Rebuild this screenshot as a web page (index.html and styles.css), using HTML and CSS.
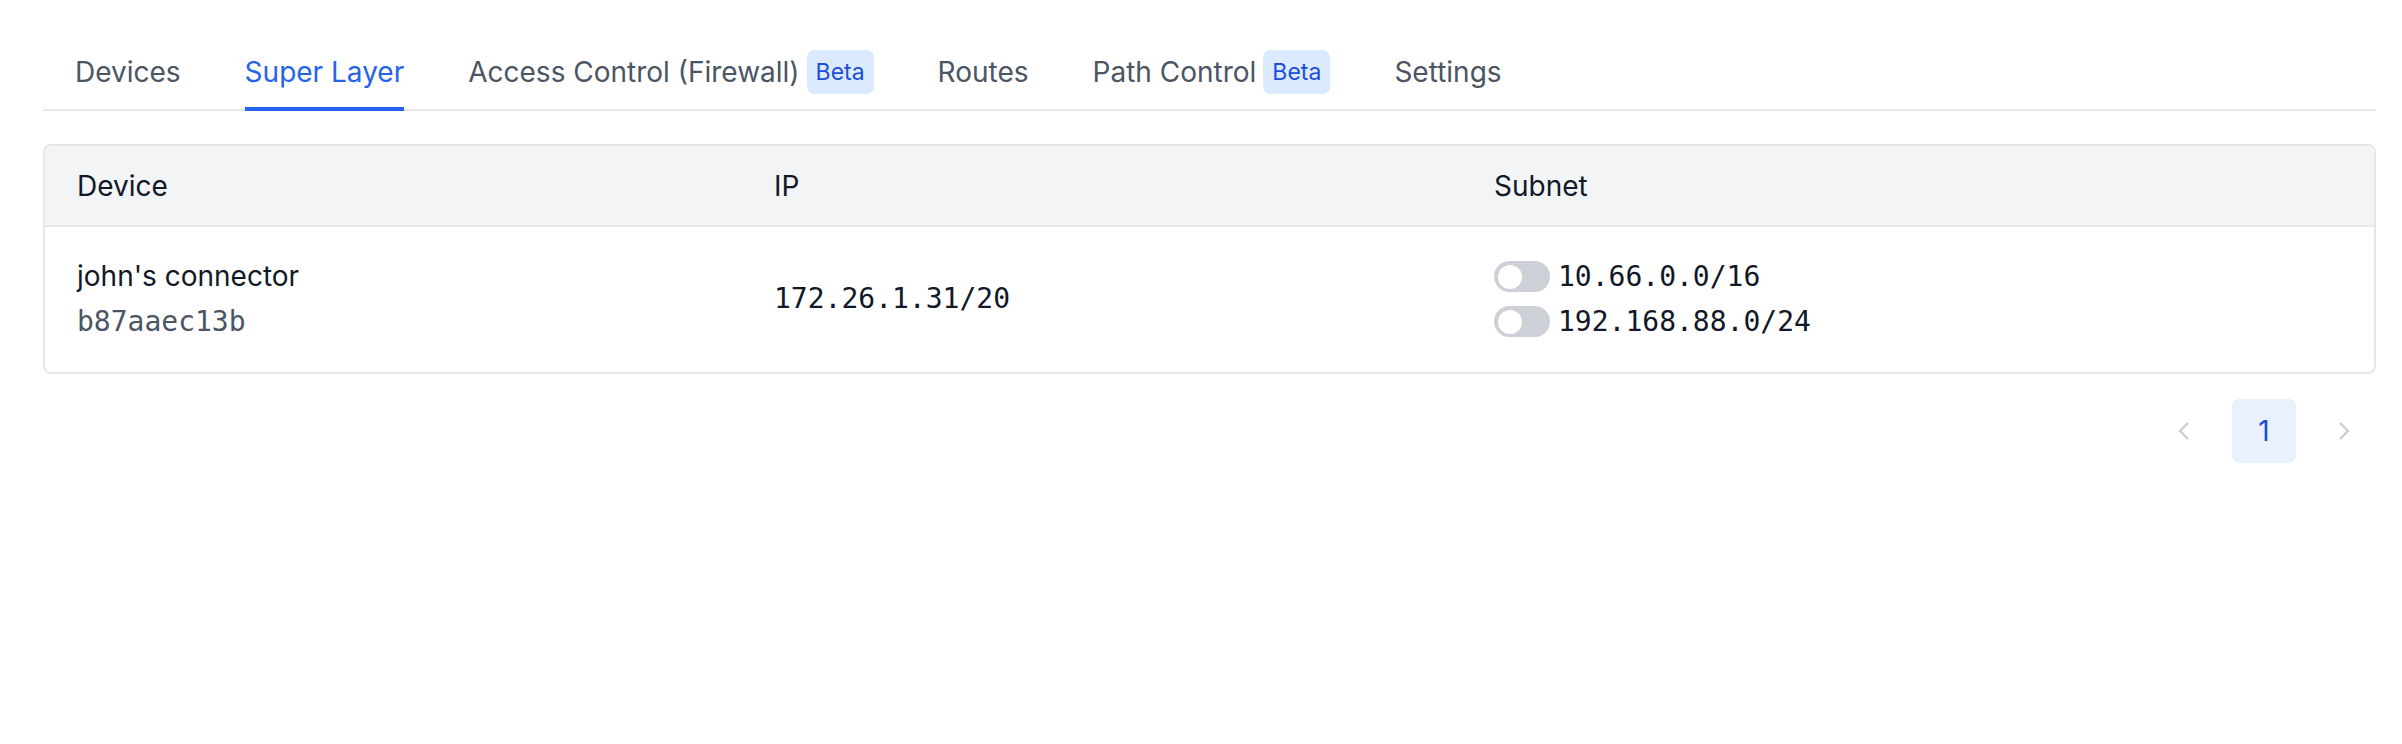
FILE: index.html
```html
<!DOCTYPE html>
<html lang="en">
<head>
    <meta charset="UTF-8">
    <title>Super Layer</title>
    <link rel="stylesheet" href="styles.css">
</head>
<body>
    <div class="page">
        <nav class="tabs">
            <a class="tab">Devices</a>
            <a class="tab active">Super Layer</a>
            <a class="tab">Access Control (Firewall) <span class="badge">Beta</span></a>
            <a class="tab">Routes</a>
            <a class="tab">Path Control <span class="badge">Beta</span></a>
            <a class="tab">Settings</a>
        </nav>

        <div class="table-wrap">
            <table class="devices">
                <colgroup>
                    <col class="col-device">
                    <col class="col-ip">
                    <col>
                </colgroup>
                <thead>
                    <tr>
                        <th>Device</th>
                        <th>IP</th>
                        <th>Subnet</th>
                    </tr>
                </thead>
                <tbody>
                    <tr>
                        <td>
                            <div class="device-name">john's connector</div>
                            <div class="device-id">b87aaec13b</div>
                        </td>
                        <td class="mono">172.26.1.31/20</td>
                        <td>
                            <div class="subnets">
                                <label class="subnet"><span class="toggle"></span><span class="mono">10.66.0.0/16</span></label>
                                <label class="subnet"><span class="toggle"></span><span class="mono">192.168.88.0/24</span></label>
                            </div>
                        </td>
                    </tr>
                </tbody>
            </table>
        </div>

        <div class="pager">
            <button class="page-btn arrow" disabled>
                <svg width="12" height="18" viewBox="0 0 12 18"><polyline points="10,1 2,9 10,17" fill="none" stroke="#c6cad0" stroke-width="2"/></svg>
            </button>
            <button class="page-btn current">1</button>
            <button class="page-btn arrow" disabled>
                <svg width="12" height="18" viewBox="0 0 12 18"><polyline points="2,1 10,9 2,17" fill="none" stroke="#c6cad0" stroke-width="2"/></svg>
            </button>
        </div>
    </div>
</body>
</html>
```

FILE: styles.css
```css
body {
    margin: 0;
    font-family: Inter, "Noto Sans", sans-serif;
    background: white;
    color: #111827;
}

.page {
    padding: 50px 26px 0 43px;
}

.tabs {
    display: flex;
    gap: 64px;
    padding-left: 32px;
    border-bottom: 2px solid #e5e7eb;
}

.tab {
    display: flex;
    align-items: center;
    gap: 7px;
    font-size: 28px;
    line-height: 42px;
    color: #4b5563;
    padding-bottom: 13px;
    border-bottom: 4px solid transparent;
    margin-bottom: -2px;
    cursor: pointer;
}

.tab.active {
    color: #2563eb;
    border-bottom-color: #2563eb;
}

.badge {
    display: inline-block;
    background-color: #dbeafe;
    color: #1d4ed8;
    font-size: 23px;
    line-height: 44px;
    padding: 0 9px;
    border-radius: 7px;
}

.table-wrap {
    margin-top: 33px;
    border: 2px solid #e5e7eb;
    border-radius: 8px;
    overflow: hidden;
}

.devices {
    width: 100%;
    border-collapse: collapse;
    table-layout: fixed;
    font-size: 28px;
    line-height: 42px;
}

.col-device {
    width: 697px;
}

.col-ip {
    width: 720px;
}

.devices th {
    text-align: left;
    font-weight: 400;
    background-color: #f3f4f6;
    padding: 19px 32px 18px;
    border-bottom: 2px solid #e5e7eb;
}

.devices td {
    padding: 28px 32px 29px;
    vertical-align: middle;
}

.mono {
    font-family: "DejaVu Sans Mono", "Liberation Mono", monospace;
    font-size: 28px;
}

.device-id {
    margin-top: 4px;
    font-family: "DejaVu Sans Mono", "Liberation Mono", monospace;
    color: #4b5563;
}

.subnets {
    display: flex;
    flex-direction: column;
    gap: 3px;
}

.subnet {
    display: flex;
    align-items: center;
    gap: 8px;
}

.toggle {
    display: flex;
    align-items: center;
    width: 56px;
    height: 31px;
    padding: 0 4px;
    box-sizing: border-box;
    border-radius: 16px;
    background-color: #cdd1d7;
}

.toggle::before {
    content: "";
    width: 24px;
    height: 24px;
    border-radius: 50%;
    background: white;
}

.pager {
    display: flex;
    justify-content: flex-end;
    gap: 16px;
    margin-top: 25px;
}

.page-btn {
    width: 64px;
    height: 64px;
    border: none;
    border-radius: 7px;
    background: transparent;
    font-family: Inter, sans-serif;
    font-size: 28px;
    display: flex;
    align-items: center;
    justify-content: center;
    padding: 0;
}

.page-btn.current {
    background-color: #e8f1fd;
    color: #1d4ed8;
}
```
